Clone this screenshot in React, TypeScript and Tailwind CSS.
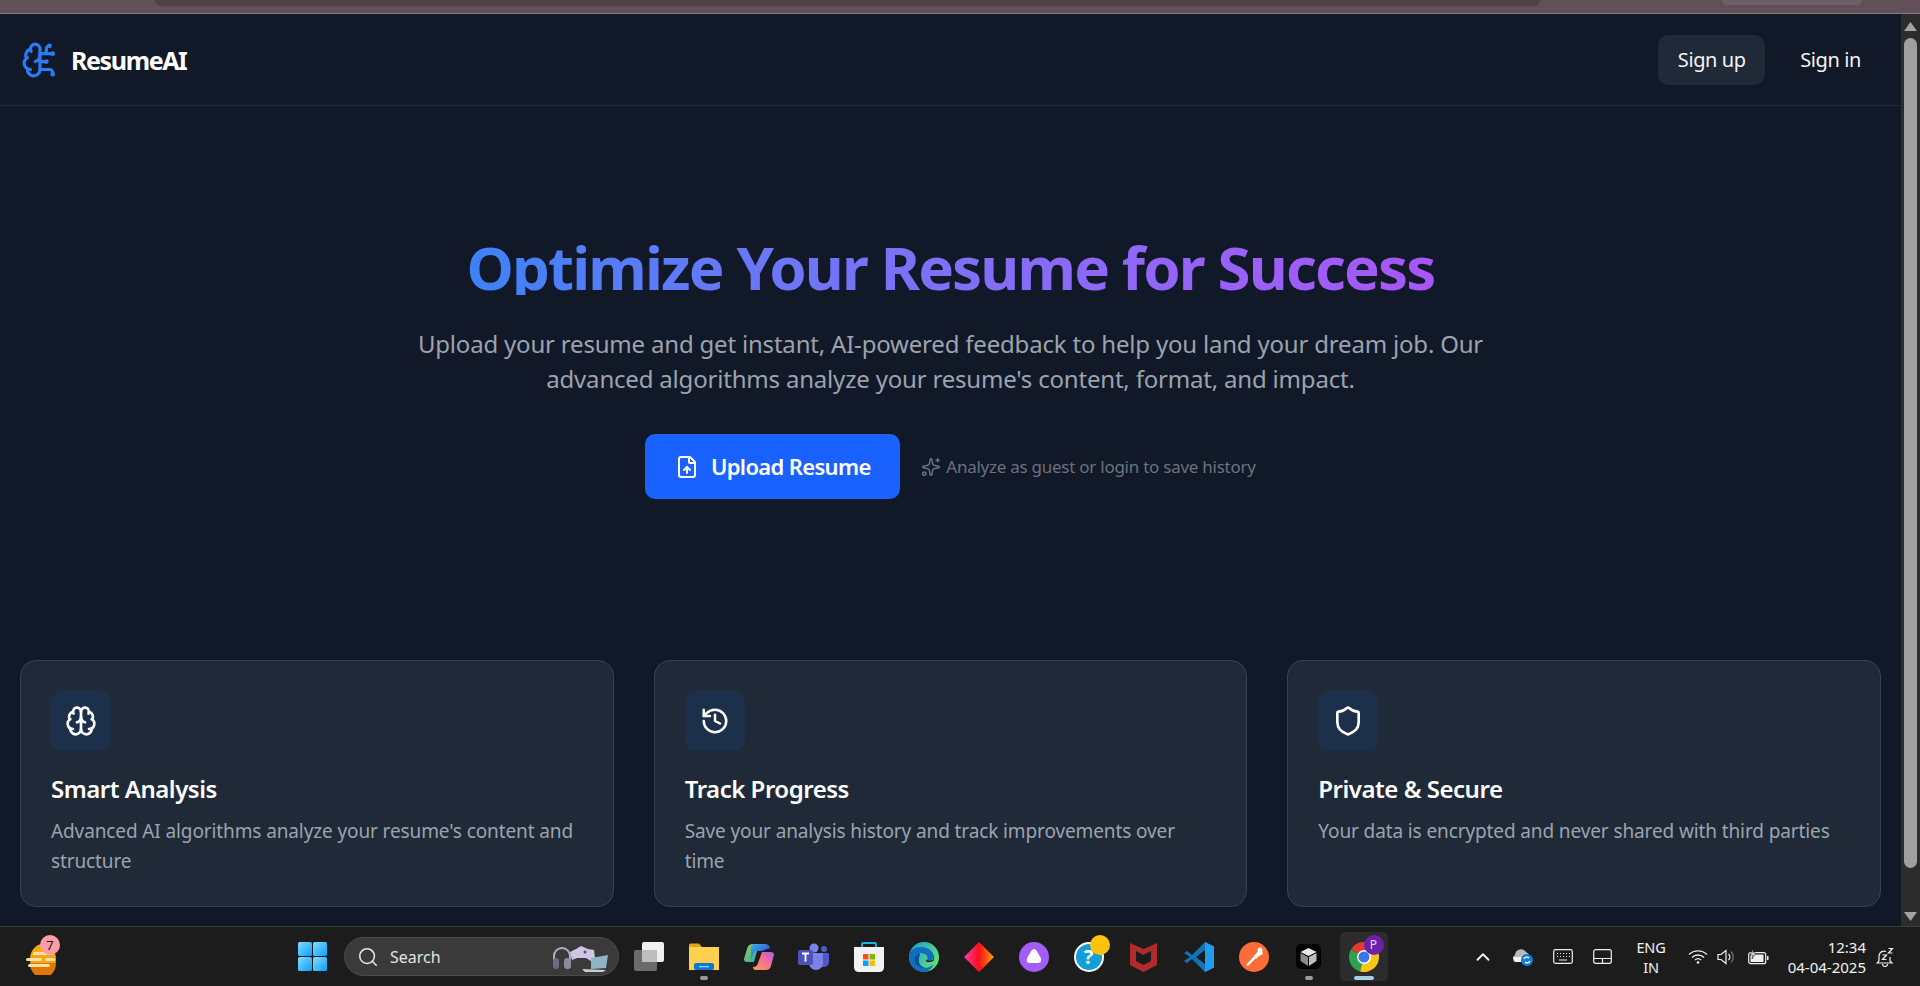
import { Brain, BrainCircuit, FileUp, History, Shield, Sparkles, Search, ChevronUp } from "lucide-react";

const font = "[font-family:'Noto_Sans',sans-serif]";

function Card({ icon, title, lines }: { icon: React.ReactNode; title: string; lines: string }) {
  return (
    <div className="flex-1 min-w-0 h-[247px] rounded-[16px] border border-[#374151] bg-[#1f2937] px-[30px] pt-[30px]">
      <div className="w-[60px] h-[60px] rounded-[10px] bg-[#1c2f4b] flex items-center justify-center text-white">{icon}</div>
      <h3 className="mt-[19px] text-[24px] leading-[38px] font-semibold text-white tracking-[-0.02em]">{title}</h3>
      <p className="mt-[8px] text-[19px] leading-[30px] text-[#9ca3af] tracking-[-0.006em] whitespace-pre-line">{lines}</p>
    </div>
  );
}

function Slot({ children, active, dot }: { children: React.ReactNode; active?: boolean; dot?: boolean }) {
  return (
    <div className={`relative h-[49px] flex items-center justify-center ${active ? "w-[48px] mx-[3.5px] rounded-[5px] bg-[#2c2c2c]" : "w-[55px]"}`}>
      {children}
      {dot && <span className="absolute bottom-[1px] left-1/2 -translate-x-1/2 w-[8px] h-[4px] rounded-full bg-[#9a9a9a]" />}
      {active && <span className="absolute bottom-[1px] left-1/2 -translate-x-1/2 w-[20px] h-[4px] rounded-full bg-[#a5cfe6]" />}
    </div>
  );
}

function Taskbar() {
  return (
    <div className="h-[60px] shrink-0 border-t border-[#3d3d3d] bg-[#1c1c1c] flex items-center text-white">
      <div className="relative w-[298px] shrink-0 h-full">
        <svg className="absolute left-[25px] top-[12px]" width="38" height="36" viewBox="0 0 38 36">
          <ellipse cx="18" cy="20" rx="13" ry="15" fill="#f5a70f" />
          <path d="M5 25h26a13 15 0 0 1-26 0z" fill="#e07606" transform="translate(0 -1)" />
          <rect x="8" y="13" width="20" height="3" rx="1.5" fill="#f6e2ad" />
          <rect x="1" y="19" width="16" height="3" rx="1.5" fill="#f6e2ad" />
          <rect x="20" y="19" width="10" height="3" rx="1.5" fill="#f6e2ad" />
          <rect x="3" y="25" width="22" height="3" rx="1.5" fill="#f6e2ad" />
        </svg>
        <span className="absolute left-[40px] top-[8px] w-[20px] h-[20px] rounded-full bg-[#ff9ba5] text-[#111] text-[13px] leading-[20px] text-center">7</span>
      </div>
      <svg width="29" height="29" viewBox="0 0 29 29" className="shrink-0">
        <defs>
          <linearGradient id="w" x1="0" y1="0" x2="1" y2="1"><stop offset="0" stopColor="#7fe0fb" /><stop offset="1" stopColor="#0f9bfb" /></linearGradient>
        </defs>
        <rect x="0" y="0" width="14" height="14" rx="1.5" fill="url(#w)" />
        <rect x="15" y="0" width="14" height="14" rx="1.5" fill="url(#w)" />
        <rect x="0" y="15" width="14" height="14" rx="1.5" fill="url(#w)" />
        <rect x="15" y="15" width="14" height="14" rx="1.5" fill="url(#w)" />
      </svg>
      <div className="ml-[17px] w-[275px] h-[39px] shrink-0 rounded-full border border-[#4b4b4b] bg-[#3a3a3a] flex items-center relative">
        <Search size={22} strokeWidth={1.7} className="ml-[12px] text-[#e8e8e8]" />
        <span className="ml-[11px] text-[16px] text-[#e4e4e4]">Search</span>
        <svg className="absolute right-[6px] top-[6px]" width="60" height="28" viewBox="0 0 60 28">
          <path d="M2 18V12a8 8 0 0 1 16 0v6" fill="none" stroke="#aeb0bd" strokeWidth="2" />
          <rect x="1" y="14" width="6" height="11" rx="3" fill="#6c6e80" />
          <rect x="12" y="14" width="7" height="11" rx="3" fill="#8a8c9c" />
          <path d="M18 8l6-3 5-3 7 3 6 1 1 8-4 3-5-3h-9l-5 2z" fill="#cfc6e6" />
          <circle cx="33" cy="8" r="1.5" fill="#555" />
          <path d="M39 14l17-3-2 13-15 1z" fill="#8fb4c8" />
          <path d="M30 25l24 1-3 2H33z" fill="#c7cdd4" />
        </svg>
      </div>
      <div className="ml-[2px] flex items-center shrink-0">
        <Slot>
          <svg width="30" height="29" viewBox="0 0 30 29">
            <rect x="0" y="8" width="23" height="21" rx="2" fill="#6b6b6b" />
            <rect x="8" y="0" width="22" height="20" rx="2" fill="#f0f0f0" />
            <rect x="8" y="8" width="15" height="12" fill="#bdbdbd" />
          </svg>
        </Slot>
        <Slot dot>
          <svg width="30" height="27" viewBox="0 0 30 27">
            <path d="M0 2a1.5 1.5 0 0 1 1.5-1.5H10l3 3.5h-13z" fill="#e3a414" />
            <path d="M0 4h30v23H0z" fill="#fdd14e" />
            <rect x="5" y="20" width="20" height="7" rx="2" fill="#0d78d4" />
            <rect x="10" y="23" width="10" height="1.3" fill="#9fd0f5" />
          </svg>
        </Slot>
        <Slot>
          <svg width="30" height="26" viewBox="0 0 30 26">
            <defs>
              <linearGradient id="c1" x1="0" y1="0" x2="1" y2="1"><stop offset="0" stopColor="#2fb7e8" /><stop offset="0.6" stopColor="#3c5fe0" /><stop offset="1" stopColor="#7a3fd0" /></linearGradient>
              <linearGradient id="c2" x1="0" y1="1" x2="1" y2="0"><stop offset="0" stopColor="#f7a24b" /><stop offset="0.6" stopColor="#ef6b9f" /><stop offset="1" stopColor="#a35be8" /></linearGradient>
              <linearGradient id="c3" x1="0" y1="0" x2="1" y2="1"><stop offset="0" stopColor="#a8d14a" /><stop offset="1" stopColor="#1fa6b8" /></linearGradient>
            </defs>
            <path d="M3 5q1-5 6-5h6l-5 18H3q-3 0-3-3z" fill="url(#c3)" />
            <path d="M7 3q1-3 5-3h9q4 0 5 4l-8 3h-6q-2 0-2 2l-3 6z" fill="url(#c1)" />
            <path d="M18 8h9q3 0 3 3l-3 11q-1 4-5 4H12q-3 0-3-3 4 0 5-4z" fill="url(#c2)" />
          </svg>
        </Slot>
        <Slot>
          <svg width="31" height="27" viewBox="0 0 31 27">
            <circle cx="16" cy="5" r="4.5" fill="#7b83eb" />
            <circle cx="26" cy="6" r="3" fill="#5059c9" />
            <path d="M20 10h10a1 1 0 0 1 1 1v8a5 5 0 0 1-5 5h-5z" fill="#5059c9" />
            <path d="M8 10h16a1 1 0 0 1 1 1v9a7 7 0 0 1-14 0z" fill="#7b83eb" />
            <rect x="0" y="7" width="15" height="15" rx="2" fill="#4b53bc" />
            <path d="M4 10.500h7M7.500 10.500v8" stroke="#fff" strokeWidth="1.8" />
          </svg>
        </Slot>
        <Slot>
          <svg width="30" height="30" viewBox="0 0 30 30">
            <path d="M8 5V2q0-1 1-1h12q1 0 1 1v3" fill="none" stroke="#19b5e8" strokeWidth="1.8" />
            <path d="M0 5h30v20q0 5-5 5H5q-5 0-5-5z" fill="#f2f2f2" />
            <rect x="9" y="12" width="5.500" height="5.500" fill="#f25022" />
            <rect x="15.500" y="12" width="5.500" height="5.500" fill="#7fba00" />
            <rect x="9" y="18.500" width="5.500" height="5.500" fill="#00a4ef" />
            <rect x="15.500" y="18.500" width="5.500" height="5.500" fill="#ffb900" />
          </svg>
        </Slot>
        <Slot>
          <svg width="30" height="30" viewBox="0 0 30 30">
            <defs>
              <linearGradient id="e1" x1="0" y1="0" x2="1" y2="0.6"><stop offset="0" stopColor="#1a9ad9" /><stop offset="1" stopColor="#5fe07a" /></linearGradient>
            </defs>
            <circle cx="15" cy="15" r="15" fill="url(#e1)" />
            <path d="M0 15C0 8 6 5 12 5c7 0 12 4 13 9 .5 3-2 5-7 4 2-4-2-7-6-7-5 0-8 5-6 10 2 4 7 6 11 5 3-.5 6-2 8-4-2 5-7 8-10 8C7 30 0 24 0 15z" fill="#0c6fc0" />
            <path d="M11 11c-4 1-7 5-5 10 2 4 7 6 12 5-5 0-9-4-8-9 0-2 1-4 1-6z" fill="#0a4f9a" />
            <path d="M18 18c4 1 7 1 7-3 1 3-1 5-5 5-3 0-4-1-2-2z" fill="#1c1c1c" />
          </svg>
        </Slot>
        <Slot>
          <svg width="30" height="30" viewBox="0 0 30 30">
            <defs>
              <linearGradient id="d1" x1="0" y1="0" x2="1" y2="0"><stop offset="0" stopColor="#f53ea0" /><stop offset="0.5" stopColor="#ff0d1a" /><stop offset="1" stopColor="#ffa010" /></linearGradient>
            </defs>
            <path d="M15 0l15 15-15 15L0 15z" fill="url(#d1)" />
          </svg>
        </Slot>
        <Slot>
          <svg width="30" height="30" viewBox="0 0 30 30">
            <circle cx="15" cy="15" r="15" fill="#a25cf7" />
            <path d="M15 7c2 0 3 2 5 6 2 3 3 5 1.500 7-1 1-2 1-6.500 1s-6 0-7-1c-1-2 0-4 2-7 2-4 3-6 5-6z" fill="#fff" />
          </svg>
        </Slot>
        <Slot>
          <div className="relative w-[30px] h-[30px]">
            <div className="w-[30px] h-[30px] rounded-full bg-[#129fd8] border-[2px] border-white flex items-center justify-center text-white text-[20px] font-bold leading-none">?</div>
            <span className="absolute -top-[7px] left-[16px] w-[20px] h-[20px] rounded-full bg-[#fdc20c]" />
          </div>
        </Slot>
        <Slot>
          <svg width="27" height="30" viewBox="0 0 27 30">
            <path d="M0 1l13.500 6L27 1v22l-13.500 7L0 23z" fill="#b02a2e" />
            <path d="M6 9l7.500 4L21 9v10l-7.500 4L6 19z" fill="#1c1c1c" />
          </svg>
        </Slot>
        <Slot>
          <svg width="30" height="30" viewBox="0 0 30 30">
            <path d="M21 0l9 4.500v21L21 30 8 17l-5 4-3-2 6-4-6-4 3-2 5 4z" fill="#0f74b8" />
            <path d="M21 0l9 4.500v21L21 30z" fill="#1f9cf0" />
            <path d="M21 8v14l-9-7z" fill="#1c1c1c" />
          </svg>
        </Slot>
        <Slot>
          <svg width="30" height="30" viewBox="0 0 30 30">
            <circle cx="15" cy="15" r="15" fill="#ff6c37" />
            <path d="M7 23l9-10 2 2-9 9z" fill="#fff" />
            <path d="M15 14l5-6 3 1 1 3-4 2-3 3z" fill="#fff" />
            <circle cx="21" cy="8" r="2.500" fill="#fff" />
          </svg>
        </Slot>
        <Slot dot>
          <div className="w-[25px] h-[25px] rounded-[5px] bg-black flex items-center justify-center">
            <svg width="17" height="18" viewBox="0 0 17 18">
              <path d="M8.500 0l8 4-8 4-8-4z" fill="#e8e8e8" />
              <path d="M0.500 5l7.500 4v9l-7.500-5z" fill="#8a8a8a" />
              <path d="M16.500 5l-7.500 4v9l7.500-5z" fill="#bdbdbd" />
            </svg>
          </div>
        </Slot>
        <Slot active>
          <div className="relative w-[30px] h-[30px]">
            <svg width="30" height="30" viewBox="0 0 30 30">
              <path d="M15 15L2 7.500A15 15 0 0 1 28 7.500z" fill="#e33b2e" />
              <path d="M15 15L2 7.500A15 15 0 0 0 11 29.500z" fill="#2ba24c" />
              <path d="M15 15L11 29.500A15 15 0 0 0 28 7.500z" fill="#f9c513" />
              <circle cx="15" cy="15" r="7" fill="#fff" />
              <circle cx="15" cy="15" r="5.500" fill="#3b78e7" />
            </svg>
            <span className="absolute -top-[7px] left-[15px] w-[20px] h-[20px] rounded-full bg-[#6b21a8] text-[#e9d5ff] text-[12px] leading-[20px] text-center">P</span>
          </div>
        </Slot>
      </div>
      <div className="ml-auto flex items-center h-full pr-[26px]">
        <ChevronUp size={22} strokeWidth={2} className="text-[#f2f2f2]" />
        <svg className="ml-[18px]" width="22" height="20" viewBox="0 0 22 20">
          <path d="M3 15a4 4 0 0 1 0-7 6 6 0 0 1 11-3 5 5 0 0 1 3 4v6z" fill="#b9b9b9" />
          <path d="M1 10h12v5H3z" fill="#f4f4f4" />
          <circle cx="15" cy="13" r="6" fill="#0e7ed6" />
          <path d="M12 12a3 3 0 0 1 5-1M18 14a3 3 0 0 1-5 1" fill="none" stroke="#fff" strokeWidth="1.300" />
        </svg>
        <svg className="ml-[19px]" width="20" height="15" viewBox="0 0 20 15">
          <rect x="0.700" y="0.700" width="18.600" height="13.600" rx="1.800" fill="none" stroke="#efefef" strokeWidth="1.200" />
          <path d="M4 4.500h1M7 4.500h1M10 4.500h1M13 4.500h1M16 4.500h1M4 7.500h1M7 7.500h1M10 7.500h1M13 7.500h1M16 7.500h1M6 11h8" stroke="#efefef" strokeWidth="1.200" />
        </svg>
        <svg className="ml-[20px]" width="19" height="15" viewBox="0 0 19 15">
          <rect x="0.700" y="0.700" width="17.600" height="13.600" rx="2" fill="none" stroke="#efefef" strokeWidth="1.200" />
          <path d="M1 9.500h17M9.500 9.500v5" stroke="#efefef" strokeWidth="1.200" />
        </svg>
        <div className="ml-[22px] w-[34px] text-center text-[14.5px] leading-[20px] text-[#f2f2f2] tracking-[-0.01em]">ENG<br />IN</div>
        <svg className="ml-[20px]" width="20" height="15" viewBox="0 0 20 15">
          <path d="M1 5.500a13 13 0 0 1 18 0M4 8.500a8.500 8.500 0 0 1 12 0M7 11a4.500 4.500 0 0 1 6 0" fill="none" stroke="#efefef" strokeWidth="1.300" />
          <circle cx="10" cy="13.500" r="1.300" fill="#efefef" />
        </svg>
        <svg className="ml-[9px]" width="20" height="16" viewBox="0 0 20 16">
          <path d="M1 5.500h3l5-4v13l-5-4H1z" fill="none" stroke="#efefef" strokeWidth="1.200" />
          <path d="M11.500 5a4 4 0 0 1 0 6" fill="none" stroke="#efefef" strokeWidth="1.200" />
          <path d="M14 2.500a8 8 0 0 1 0 11" fill="none" stroke="#777" strokeWidth="1.200" />
        </svg>
        <svg className="ml-[11px]" width="21" height="16" viewBox="0 0 21 16">
          <rect x="0.700" y="3.700" width="17" height="11" rx="2" fill="none" stroke="#efefef" strokeWidth="1.200" />
          <rect x="2.500" y="5.500" width="13" height="7.500" fill="#efefef" />
          <rect x="19" y="7" width="1.500" height="4" fill="#efefef" />
          <path d="M5 0L2 6h3l-1 4 4-6H5z" fill="#efefef" stroke="#1c1c1c" strokeWidth="0.600" />
        </svg>
        <div className="ml-[17px] w-[80px] text-right text-[15px] leading-[20px] text-[#f2f2f2]">12:34<br />04-04-2025</div>
        <svg className="ml-[10px]" width="18" height="20" viewBox="0 0 18 20">
          <path d="M3 14V9a5 5 0 0 1 7-4.500M14 10v4l2 2H1l2-2M6.500 17a2.500 2.500 0 0 0 5 0" fill="none" stroke="#efefef" strokeWidth="1.200" />
          <path d="M6.500 8h4l-4 4.500h4M12.500 1.500h4l-4 4.500h4" fill="none" stroke="#efefef" strokeWidth="1.200" />
        </svg>
      </div>
    </div>
  );
}

export default function App() {
  return (
    <div className={`h-[986px] w-full overflow-hidden flex flex-col bg-[#111827] ${font}`}>
      <div className="relative h-[14px] shrink-0 bg-[#625059] border-b border-[#8b7780]">
        <div className="absolute left-[155px] top-0 w-[1385px] h-[6px] rounded-b-[10px] bg-[#514048]" />
        <div className="absolute left-[1722px] top-0 w-[140px] h-[5px] rounded-b-[8px] bg-[#6f5d68]" />
      </div>
      <div className="flex-1 min-h-0 flex">
        <main className="flex-1 min-w-0 flex flex-col">
          <header className="h-[92px] shrink-0 border-b border-[#1f2937] pl-[21px] pr-[40px] flex items-center">
            <BrainCircuit size={38} strokeWidth={2} className="text-[#2a7bf6]" />
            <span className="ml-[12px] mt-[3px] text-[25px] font-bold text-white tracking-[-0.055em]">ResumeAI</span>
            <button className="ml-auto h-[50px] w-[107px] rounded-[10px] bg-[#1f2937] text-[20px] text-[#f3f4f6] tracking-[-0.02em]">Sign up</button>
            <button className="ml-[35px] text-[20px] text-[#f3f4f6] tracking-[-0.02em]">Sign in</button>
          </header>
          <section className="flex flex-col items-center pt-[131px]">
            <h1 className="h-[58px] text-[60px] leading-[60px] font-bold tracking-[-0.031em] bg-linear-to-r from-[#3b82f6] to-[#a855f7] bg-clip-text text-transparent">Optimize Your Resume for Success</h1>
            <p className="mt-[31px] w-[1100px] text-center text-[24px] leading-[35px] text-[#9ca3af] tracking-[-0.008em]">Upload your resume and get instant, AI-powered feedback to help you land your dream job. Our<br />advanced algorithms analyze your resume's content, format, and impact.</p>
            <div className="mt-[38px] flex items-center">
              <button className="h-[65px] w-[255px] rounded-[10px] bg-[#1a62ff] text-white text-[22px] font-semibold flex items-center justify-center gap-[12px] tracking-[-0.03em]">
                <FileUp size={24} strokeWidth={2} />
                Upload Resume
              </button>
              <div className="ml-[21px] flex items-center gap-[5px] text-[#6b7280] text-[17px] tracking-[-0.015em]">
                <Sparkles size={20} strokeWidth={1.8} />
                Analyze as guest or login to save history
              </div>
            </div>
          </section>
          <section className="mt-auto mb-[19px] px-[20px] flex gap-[40px]">
            <Card icon={<Brain size={32} strokeWidth={2} />} title="Smart Analysis" lines={"Advanced AI algorithms analyze your resume's content and\nstructure"} />
            <Card icon={<History size={30} strokeWidth={2} />} title="Track Progress" lines={"Save your analysis history and track improvements over\ntime"} />
            <Card icon={<Shield size={32} strokeWidth={2} />} title="Private & Secure" lines="Your data is encrypted and never shared with third parties" />
          </section>
        </main>
        <div className="w-[19px] shrink-0 bg-[#2c2c2c] flex flex-col items-center">
          <svg className="mt-[8px]" width="13" height="9" viewBox="0 0 13 9"><path d="M6.500 0L13 9H0z" fill="#a3a3a3" /></svg>
          <div className="mt-[7px] w-[13px] h-[830px] rounded-full bg-[#9f9f9f]" />
          <svg className="mt-auto mb-[5px]" width="13" height="9" viewBox="0 0 13 9"><path d="M6.500 9L13 0H0z" fill="#a3a3a3" /></svg>
        </div>
      </div>
      <Taskbar />
    </div>
  );
}
